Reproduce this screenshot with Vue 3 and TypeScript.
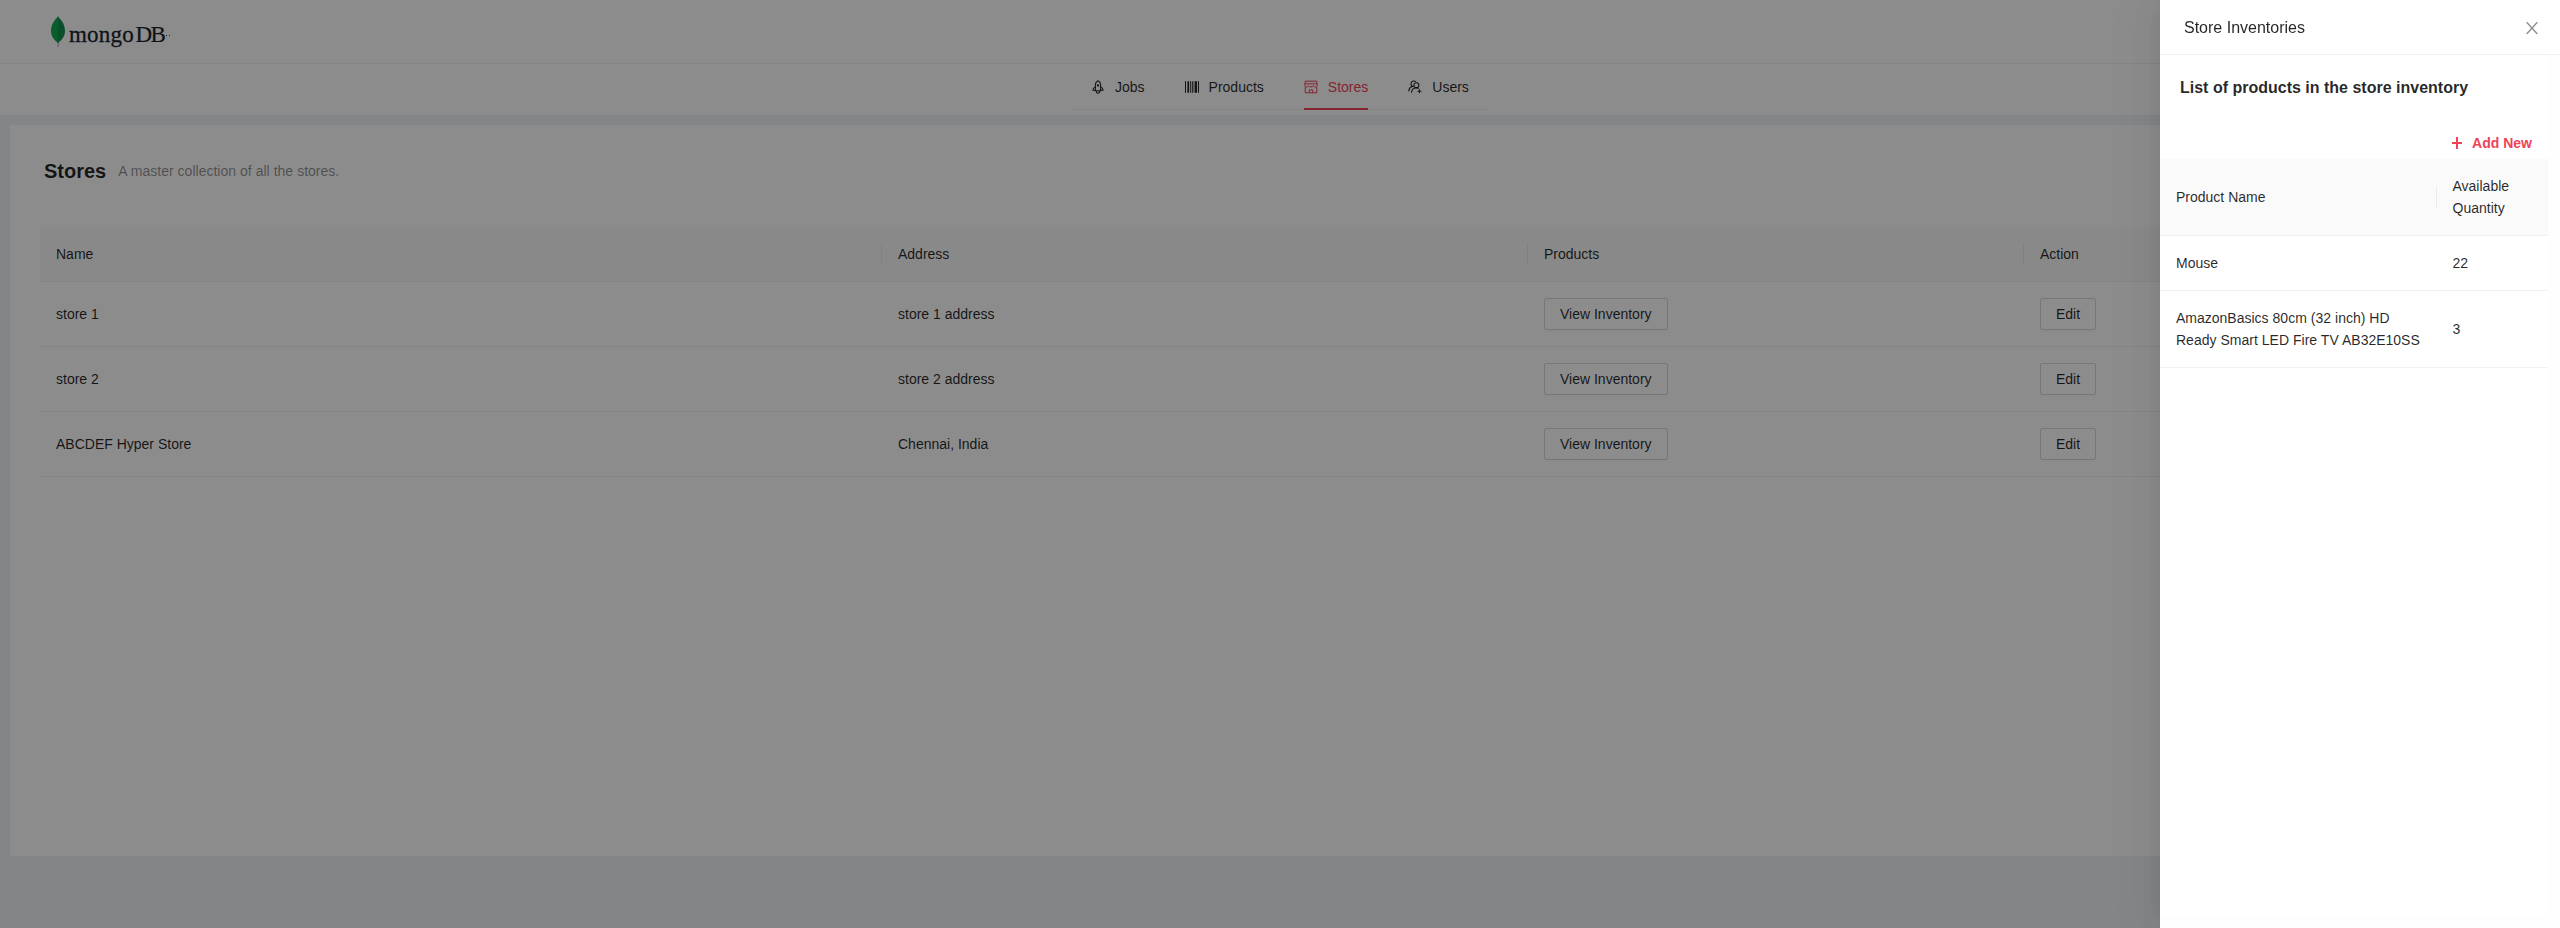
<script setup lang="ts">
interface NavItem { label: string; icon: 'rocket' | 'barcode' | 'shop' | 'users'; active?: boolean }
interface Store { name: string; address: string }
interface Product { name: string; quantity: number }

const nav: NavItem[] = [
  { label: 'Jobs', icon: 'rocket' },
  { label: 'Products', icon: 'barcode' },
  { label: 'Stores', icon: 'shop', active: true },
  { label: 'Users', icon: 'users' },
]
const stores: Store[] = [
  { name: 'store 1', address: 'store 1 address' },
  { name: 'store 2', address: 'store 2 address' },
  { name: 'ABCDEF Hyper Store', address: 'Chennai, India' },
]
const products: Product[] = [
  { name: 'Mouse', quantity: 22 },
  { name: 'AmazonBasics 80cm (32 inch) HD Ready Smart LED Fire TV AB32E10SS', quantity: 3 },
]
</script>

<template>
  <div class="page">
    <header class="top">
      <svg class="leaf" width="15" height="32" viewBox="0 0 15 32">
        <path d="M6.300 26h1.800l-.4 5H6.600z" fill="#b8c4c2" />
        <path d="M7 0C5.500 3 0 6.500 0 15c0 6 4 9.500 7 12z" fill="#10aa50" />
        <path d="M7 0c1.500 3 7 6.500 7 15 0 6-4 9.500-7 12z" fill="#12924f" />
      </svg>
      <span class="word"><span class="mongo">mongo</span><span class="db">DB</span><i></i></span>
    </header>
    <nav class="nav">
      <ul class="menu">
        <li v-for="n in nav" :key="n.label" :class="{ active: n.active }">
          <svg v-if="n.icon === 'rocket'" width="14" height="14" viewBox="0 0 14 14" fill="none" stroke="currentColor" stroke-width="1.1">
            <path d="M4.400 10.800V4.600C4.400 3 5.400 1.600 7 .8c1.600.8 2.600 2.200 2.600 3.800v6.200zM4.400 6.800C2.800 7.600 2 8.800 1.900 10.300H4.400M9.600 6.800c1.600.8 2.400 2 2.500 3.500H9.600M5.300 11c0 1.400.6 2.200 1.700 2.200s1.700-.8 1.700-2.200" />
            <circle cx="7" cy="5.500" r=".6" />
          </svg>
          <svg v-else-if="n.icon === 'barcode'" width="14" height="14" viewBox="0 0 14 14" fill="currentColor">
            <path d="M0 1.200h1v11.600H0zM2.400 1.200h1.700v11.600H2.400zM5.200 1.200h1v11.600h-1zM7.200 1.200h1.200v11.600H7.200zM9.600 1.200h2.400v11.600H9.600zM13 1.200h1v11.600h-1z" />
          </svg>
          <svg v-else-if="n.icon === 'shop'" width="14" height="14" viewBox="0 0 14 14" fill="none" stroke="currentColor" stroke-width="1">
            <path d="M1.200 3.800V1.200h11.600v2.600M.8 3.800h12.400v1.500C13.200 6.400 12.400 7 11.400 7S9.500 6.400 9.300 5.700C9 6.500 8.200 7 7 7S5 6.500 4.700 5.700C4.500 6.400 3.600 7 2.600 7S.8 6.400.8 5.300zM1.200 7v5.800h11.600V7M5.300 12.800V9.900h3.400v2.900" />
          </svg>
          <svg v-else width="14" height="14" viewBox="0 0 14 14" fill="none" stroke="currentColor" stroke-width="1.050">
            <circle cx="8.400" cy="5.200" r="2.500" />
            <path d="M3.400 12.800c.3-2.800 2.100-4.800 4.900-5 1 0 1.800.2 2.500.7M5.800 6.800C4 6.600 3 5.400 3 3.800 3 2.200 4.100 1 5.700 1c1 0 1.700.4 2.200 1M.7 11.300c.2-2.400 1.400-4.100 3.500-5M9.400 11.200h4M11.400 9.200v4" />
          </svg>
          <span>{{ n.label }}</span>
        </li>
      </ul>
    </nav>
    <main class="content">
      <div class="heading"><h1>Stores</h1><p>A master collection of all the stores.</p></div>
      <table class="table main-table">
        <colgroup><col class="c1" /><col class="c2" /><col class="c3" /><col /></colgroup>
        <thead><tr><th>Name</th><th>Address</th><th>Products</th><th>Action</th></tr></thead>
        <tbody>
          <tr v-for="s in stores" :key="s.name">
            <td>{{ s.name }}</td><td>{{ s.address }}</td>
            <td><button>View Inventory</button></td><td><button>Edit</button></td>
          </tr>
        </tbody>
      </table>
    </main>
  </div>
  <div class="mask"></div>
  <aside class="drawer">
    <div class="drawer-head">
      <span>Store Inventories</span>
      <svg width="16" height="16" viewBox="0 0 16 16" fill="none" stroke="#8c8c8c" stroke-width="1.300"><path d="M2.700 2.300 13.300 14M13.300 2.300 2.700 14" /></svg>
    </div>
    <div class="drawer-body">
      <div class="scroll">
        <h2>List of products in the store inventory</h2>
        <div class="add">
          <svg width="14" height="14" viewBox="0 0 14 14" fill="none" stroke="currentColor" stroke-width="2"><path d="M7 1v12M2 7h10" /></svg>
          <span>Add New</span>
        </div>
        <table class="table">
          <colgroup><col class="p1" /><col /></colgroup>
          <thead><tr><th>Product Name</th><th>Available Quantity</th></tr></thead>
          <tbody><tr v-for="p in products" :key="p.name"><td>{{ p.name }}</td><td>{{ p.quantity }}</td></tr></tbody>
        </table>
      </div>
    </div>
  </aside>
</template>

<style>
body { margin: 0; overflow: hidden; }
</style>

<style scoped>
* { box-sizing: border-box; }
.page, .drawer { font: 14px/22px "Liberation Sans", Arial, sans-serif; font-variant-numeric: tabular-nums; font-feature-settings: "tnum"; color: rgba(0, 0, 0, .85); }
.page { height: 928px; background: #f0f2f5; }
.top { height: 64px; background: #fff; border-bottom: 1px solid #f0f0f0; padding: 16px 0 0 51px; display: flex; align-items: flex-start; }
.leaf { display: block; }
.word { display: flex; align-items: baseline; color: #18262f; font-family: "Liberation Serif", serif; line-height: 28px; margin: 5px 0 0 3px; }
.mongo { font-size: 23px; letter-spacing: .2px; -webkit-text-stroke: .3px; }
.db { font-size: 23px; letter-spacing: -1.500px; margin-left: 1.500px; -webkit-text-stroke: .2px; }
.word i { width: 4px; height: 1px; margin-left: 2px; border: solid #21313c; border-width: 0 1px; align-self: center; }
.nav { height: 51px; background: #fff; display: flex; justify-content: center; }
.menu { margin: 0; padding: 0; list-style: none; display: flex; height: 46px; width: 418px; border-bottom: 1px solid #f0f0f0; }
.menu li { height: 46px; padding-top: 2px; line-height: 22px; margin: 0 20px; display: flex; align-items: center; border-bottom: 2px solid transparent; white-space: nowrap; }
.menu li svg { margin-right: 10px; }
.menu .active { color: #ee4357; border-color: #ee4357; }
.content { margin: 10px 10px 0; height: 731px; background: #fff; padding: 30px; }
.heading { display: flex; align-items: center; height: 32px; margin-left: 4px; }
.heading h1 { margin: 0 12px 0 0; font-size: 20px; line-height: 32px; }
.heading p { margin: 0; color: rgba(0, 0, 0, .45); word-spacing: .12px; }
.main-table { margin-top: 40px; }
.table { width: 100%; table-layout: fixed; border-collapse: separate; border-spacing: 0; }
.c1 { width: 842px; } .c2 { width: 646px; } .c3 { width: 496px; } .p1 { width: 276.500px; }
.table th { position: relative; padding: 16px; text-align: left; font-weight: 400; background: #fafafa; border-bottom: 1px solid #f0f0f0; }
.table th:not(:last-child)::after { content: ""; position: absolute; right: 0; top: 50%; height: 22px; width: 1px; transform: translateY(-50%); background: #ececec; }
.table td { padding: 16px; border-bottom: 1px solid #f0f0f0; }
.drawer .table td { word-spacing: .1px; }
button { display: block; height: 32px; padding: 4px 15px; font: inherit; line-height: 22px; color: inherit; background: #fff; border: 1px solid #d9d9d9; border-radius: 2px; box-shadow: 0 2px 0 rgba(0, 0, 0, .016); }
.mask { position: fixed; inset: 0; background: rgba(0, 0, 0, .45); }
.drawer { position: fixed; top: 0; right: 0; bottom: 0; width: 400px; background: #fff; display: flex; flex-direction: column; box-shadow: -6px 0 16px -8px rgba(0, 0, 0, .08), -9px 0 28px 0 rgba(0, 0, 0, .05), -12px 0 48px 16px rgba(0, 0, 0, .03); }
.drawer-head { height: 55px; flex: none; padding: 2px 20px 0 24px; display: flex; align-items: center; justify-content: space-between; font-size: 16px; border-bottom: 1px solid #f0f0f0; }
.drawer-body { flex: 1; padding: 0 12px 12px 0; background: #fefefe; }
.scroll { height: 100%; background: #fff; padding-top: 17px; }
.scroll h2 { margin: 0 0 0 20px; font-size: 16px; line-height: 32px; }
.add { margin-top: 28px; padding-right: 16px; height: 27px; display: flex; justify-content: flex-end; line-height: 22px; font-weight: 700; color: #ee4357; }
.add svg { margin: 4px 8px 0 0; }
</style>
